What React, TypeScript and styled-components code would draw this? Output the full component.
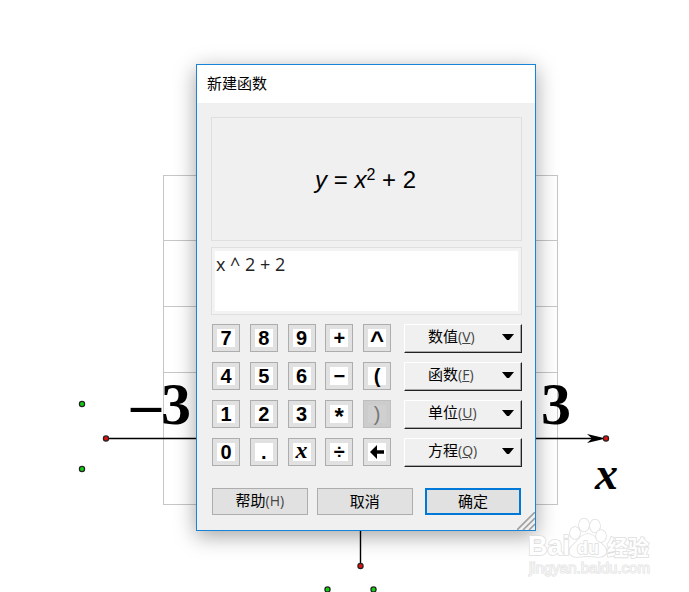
import React, { useState } from 'react';
import styled, { createGlobalStyle, css } from 'styled-components';

const ui = '"Liberation Sans", "Noto Sans CJK SC", sans-serif';

const GlobalStyle = createGlobalStyle`
  *, *::before, *::after { box-sizing: border-box; }
  body { margin: 0; background: #fff; font-family: ${ui}; color: #000; }
`;

const Desktop = styled.main`
  position: relative;
  min-height: 100vh;
  overflow: hidden;
`;

const Sketch = styled.svg`
  display: block;
  width: 100%;
  height: 100vh;
`;

const Tick = styled.text`
  font: bold 60px "Liberation Serif", serif;
`;

const AxisName = styled.text`
  font: italic bold 46px "Liberation Serif", serif;
`;

const Dialog = styled.section`
  position: absolute;
  left: 196px;
  top: 64px;
  width: 340px;
  border: 1px solid #1883d7;
  background: #f0f0f0;
  box-shadow: 0 5px 20px rgba(0, 0, 0, 0.36);
`;

const TitleBar = styled.h1`
  display: flex;
  align-items: center;
  height: 38px;
  margin: 0;
  padding: 0 10px 2px;
  background: #fff;
  font: 15px/22px "Noto Sans CJK SC", sans-serif;
`;

const Content = styled.form`
  display: flex;
  flex-direction: column;
  padding: 14px 13px 15px 14px;
`;

const Preview = styled.output`
  display: flex;
  align-items: center;
  justify-content: center;
  height: 124px;
  padding: 2px 2px 0 0;
  border: 1px solid #dfdfdf;
  font-size: 24px;
  line-height: 28px;

  sup { font-size: 16px; line-height: 0; vertical-align: 8px; }
`;

const Expression = styled.textarea`
  display: block;
  width: 100%;
  height: 68px;
  margin: 6px 0 9px;
  padding: 3px 4px;
  border: 1px solid #dfdfdf;
  outline: 3px solid #f3f3f3;
  outline-offset: -4px;
  resize: none;
  background: #fff;
  color: #222;
  font: 18px/26px "Open Sans", sans-serif;
`;

const Controls = styled.div`
  display: flex;
  gap: 13px;
  padding-left: 1px;
`;

const Keypad = styled.div`
  display: grid;
  grid-template-columns: repeat(5, 28px);
  grid-auto-rows: 28px;
  justify-content: space-between;
  row-gap: 10px;
  width: 179px;
`;

const Key = styled.button`
  display: flex;
  align-items: center;
  justify-content: center;
  padding: 0;
  border: 1px solid #adadad;
  background: #e1e1e1;

  &:disabled { background: #cccccc; border-color: #bfbfbf; }
`;

const KeyFace = styled.span<{ $serif?: boolean; $muted?: boolean }>`
  display: flex;
  align-items: center;
  justify-content: center;
  width: 18px;
  height: 18px;
  background: ${p => (p.$muted ? '#d0d0d0' : '#fff')};
  color: ${p => (p.$muted ? '#777' : '#000')};
  font: bold 20px/18px ${ui};
  ${p => p.$serif && css`font: italic bold 24px/14px "Liberation Serif", serif; padding-bottom: 4px;`}
  ${p => p.$muted && css`font-weight: normal;`}
`;

const Raised = styled.span<{ $caret?: boolean }>`
  font-size: 24px;
  line-height: 18px;
  padding-top: ${p => (p.$caret ? 4 : 6)}px;
`;

const Menus = styled.div`
  flex: 1;
  display: grid;
  grid-auto-rows: 29px;
  row-gap: 9px;
`;

const MenuButton = styled.button`
  display: flex;
  align-items: center;
  justify-content: space-between;
  padding: 0 7px 4px 23px;
  border: 1px solid;
  border-color: #fff #222 #222 #fff;
  background: #f0f0f0;
  box-shadow: inset -1px -1px 0 #a8a8a8;
  font: 15px/20px "Noto Sans CJK SC", sans-serif;
  color: #000;
`;

const Hotkey = styled.span`
  font: 14px/20px "Open Sans", sans-serif;
  color: #444;

  u { text-underline-offset: 1px; }
`;

const Footer = styled.footer`
  display: flex;
  gap: 9px;
  margin-top: 21px;
  padding: 0 1px;
`;

const PushButton = styled.button<{ $primary?: boolean }>`
  width: 31%;
  height: 27px;
  margin-left: ${p => (p.$primary ? 'auto' : '0')};
  padding: 0 0 2px;
  border: ${p => (p.$primary ? '2px solid #0078d7' : '1px solid #adadad')};
  background: #e1e1e1;
  font: 15px/20px "Noto Sans CJK SC", sans-serif;
  color: #000;
`;

const Grip = styled.svg`
  position: absolute;
  right: 0;
  bottom: 0;
`;

const Mark = styled.svg`
  position: absolute;
  left: 524px;
  top: 514px;
  fill: #fff;
  stroke: #dedede;
  stroke-width: 1.6;
  paint-order: stroke;
`;

const MarkText = styled.text<{ $size: number; $thin?: boolean }>`
  font: ${p => (p.$thin ? 'normal' : 'bold')} ${p => p.$size}px ${ui};
  ${p => p.$thin && css`fill: #f4f4f4; stroke-width: 1;`}
`;

const keys = ['7', '8', '9', '+', '^', '4', '5', '6', '−', '(', '1', '2', '3', '*', ')', '0', '.', 'x', '÷', 'back'];

const menus = [
  ['数值', 'V'],
  ['函数', 'F'],
  ['单位', 'U'],
  ['方程', 'Q'],
];

function KeyGlyph({ name }: { name: string }) {
  if (name === 'back') {
    return (
      <svg width="16" height="14" viewBox="0 0 16 14" aria-hidden="true">
        <path d="M1 7 8 0V5.2H15V8.8H8V14Z" />
      </svg>
    );
  }
  if (name === '*' || name === '^') return <Raised $caret={name === '^'}>{name}</Raised>;
  return <>{name}</>;
}

function Plane() {
  return (
    <Sketch role="img" aria-label="坐标系">
      <g fill="none" stroke="#c6c6c6" strokeWidth="1">
        <path d="M163 175.5H558M163 240.5H558M163 306.5H558M163 372.5H558M163 504.5H558" />
        <path d="M163.5 175V505M557.5 175V505" />
      </g>
      <path d="M106 438.5H600M360.5 438V566" stroke="#000" strokeWidth="1.4" fill="none" />
      <path d="M606 438.5 587 434 592 438.5 587 443Z" />
      <g stroke="#222" strokeWidth="1.2">
        <g fill="#e01010">
          <circle cx="106" cy="438.5" r="2.6" />
          <circle cx="606" cy="438.5" r="2.6" />
          <circle cx="360.5" cy="566" r="2.6" />
        </g>
        <g fill="#10d010">
          <circle cx="82" cy="404" r="2.6" />
          <circle cx="82" cy="469" r="2.6" />
          <circle cx="327.5" cy="589.5" r="2.6" />
          <circle cx="373.5" cy="589.5" r="2.6" />
        </g>
      </g>
      <Tick x="131" y="424">–3</Tick>
      <Tick x="541" y="424">3</Tick>
      <AxisName x="595" y="489">x</AxisName>
    </Sketch>
  );
}

function Watermark() {
  return (
    <Mark width="130" height="66" viewBox="0 0 130 66">
      <MarkText x="4" y="41" $size={27}>Bai</MarkText>
      <path d="M64 20C57 20 54 27 49 31C43 36 45 43 53 43C59 42 68 42 74 43C83 43 85 36 79 31C74 27 71 20 64 20Z" />
      <ellipse cx="51" cy="19" rx="5" ry="6" />
      <ellipse cx="60" cy="11" rx="5" ry="6.5" />
      <ellipse cx="71" cy="12" rx="5" ry="6.5" />
      <ellipse cx="77" cy="22" rx="5" ry="6" />
      <MarkText x="53" y="40" $size={18}>du</MarkText>
      <MarkText x="83" y="41" $size={21}>经验</MarkText>
      <MarkText x="5" y="59" $size={15} $thin>jingyan.baidu.com</MarkText>
    </Mark>
  );
}

export default function App() {
  const [value, setValue] = useState('x ^ 2 + 2');
  return (
    <Desktop>
      <GlobalStyle />
      <Plane />
      <Dialog role="dialog" aria-labelledby="dialog-title">
        <TitleBar id="dialog-title">新建函数</TitleBar>
        <Content onSubmit={e => e.preventDefault()}>
          <Preview>
            <span><i>y</i> = <i>x</i><sup>2</sup> + 2</span>
          </Preview>
          <Expression aria-label="表达式" spellCheck={false} value={value} onChange={e => setValue(e.target.value)} />
          <Controls>
            <Keypad>
              {keys.map(k => (
                <Key key={k} type="button" disabled={k === ')'} aria-label={k === 'back' ? '退格' : undefined}>
                  <KeyFace $serif={k === 'x'} $muted={k === ')'}>
                    <KeyGlyph name={k} />
                  </KeyFace>
                </Key>
              ))}
            </Keypad>
            <Menus>
              {menus.map(([label, hot]) => (
                <MenuButton key={hot} type="button" aria-haspopup="menu">
                  <span>{label}<Hotkey>(<u>{hot}</u>)</Hotkey></span>
                  <svg width="12" height="6" viewBox="0 0 12 6" aria-hidden="true">
                    <path d="M0 0H12L7 6H5Z" />
                  </svg>
                </MenuButton>
              ))}
            </Menus>
          </Controls>
          <Footer>
            <PushButton type="button">帮助<Hotkey>(H)</Hotkey></PushButton>
            <PushButton type="button">取消</PushButton>
            <PushButton type="submit" $primary>确定</PushButton>
          </Footer>
        </Content>
        <Grip width="18" height="18" viewBox="0 0 18 18" aria-hidden="true">
          <path d="M0 18 18 0M6 18 18 6M12 18 18 12" stroke="#a0a0a0" strokeWidth="1.6" />
        </Grip>
      </Dialog>
      <Watermark />
    </Desktop>
  );
}
